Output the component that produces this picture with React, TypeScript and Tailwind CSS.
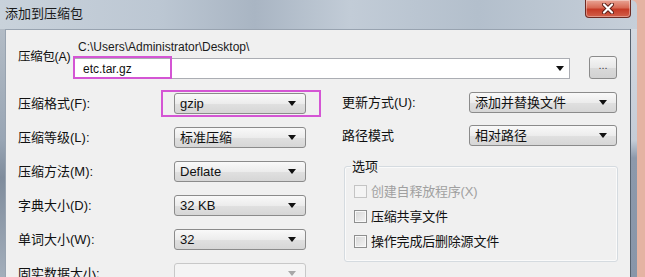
import React from "react";

const font = "font-['Liberation_Sans','Noto_Sans_CJK_SC',sans-serif]";

function Arrow({ disabled }: { disabled?: boolean }) {
  return (
    <svg width="8" height="5" viewBox="0 0 8 5" className="shrink-0">
      <path d="M0 0h8L4 5z" fill={disabled ? "#a8a8a8" : "#111"} />
    </svg>
  );
}

function Select({
  value,
  disabled,
  className = "",
}: {
  value?: string;
  disabled?: boolean;
  className?: string;
}) {
  return (
    <div
      className={`flex h-[21px] shrink-0 items-center justify-between rounded-[3px] border pl-[5px] pr-[9px] ${
        disabled
          ? "border-[#c8c8c8] bg-[#f4f4f4]"
          : "border-[#8b8b8b] bg-[linear-gradient(to_bottom,#f9f9f9,#ececec_50%,#e0e0e0_52%,#d6d6d6)]"
      } ${className}`}
    >
      <span className="whitespace-nowrap text-[13px] leading-none text-[#111]">{value}</span>
      <Arrow disabled={disabled} />
    </div>
  );
}

function Checkbox({ label, disabled }: { label: string; disabled?: boolean }) {
  return (
    <div className="flex h-[25px] items-center gap-[4px]">
      <span
        className={`h-[13px] w-[13px] shrink-0 border ${
          disabled
            ? "border-[#c4c4c4] bg-[#f4f4f4]"
            : "border-[#8e8f8f] bg-[linear-gradient(135deg,#d6d6d6,#f4f4f4)] shadow-[inset_0_0_0_1px_#f8f8f8]"
        }`}
      />
      <span
        className={`whitespace-nowrap text-[13px] leading-none tracking-[-0.2px] ${
          disabled ? "text-[#a0a0a0]" : "text-[#111]"
        }`}
      >
        {label}
      </span>
    </div>
  );
}

const leftRows: { label: string; value?: string; disabled?: boolean }[] = [
  { label: "压缩格式(F):", value: "gzip" },
  { label: "压缩等级(L):", value: "标准压缩" },
  { label: "压缩方法(M):", value: "Deflate" },
  { label: "字典大小(D):", value: "32 KB" },
  { label: "单词大小(W):", value: "32" },
  { label: "固实数据大小:", disabled: true },
];

export default function App() {
  return (
    <div
      className={`flex h-[277px] w-[645px] overflow-hidden bg-[#e4b3a3] ${font} text-[#111]`}
    >
      <div className="flex w-[637px] shrink-0 flex-col rounded-tr-[6px] bg-[linear-gradient(90deg,#c9d2db_0%,#bcc7d3_25%,#a9b5c3_40%,#c2ccd7_55%,#b3bfcc_75%,#c6cfd9_100%)]">
        {/* title bar */}
        <div className="flex h-[29px] shrink-0 items-start">
          <span className="mt-[6px] whitespace-nowrap pl-[5px] text-[13px] leading-[16px] text-[#1a1a1a]">
            添加到压缩包
          </span>
          <div className="ml-auto mr-[6px] flex h-[18px] w-[46px] items-center justify-center rounded-b-[4px] border border-t-0 border-[#6e2a22] bg-[linear-gradient(to_bottom,#e9a596,#d86a55_45%,#c53a26_55%,#d2604a)] shadow-[inset_0_0_0_1px_rgba(255,255,255,0.35)]">
            <svg width="12" height="11" viewBox="0 0 12 11">
              <path
                d="M2 1.5l8 8M10 1.5l-8 8"
                stroke="#5a1d16"
                strokeWidth="4"
                strokeLinecap="round"
              />
              <path
                d="M2 1.5l8 8M10 1.5l-8 8"
                stroke="#fff"
                strokeWidth="2.2"
                strokeLinecap="round"
              />
            </svg>
          </div>
        </div>

        <div className="flex min-h-0 flex-1">
          <div className="w-[5px] shrink-0 bg-[linear-gradient(to_bottom,#b3bcc6,#98a5b4_45%,#7f8c9c_60%,#a3aebb)]" />

          {/* dialog body */}
          <div className="min-w-0 flex-1 border-l border-t border-[#98a3b0] bg-[#f0f0f0] pl-[12px] pr-[13px] pt-[10px]">
            {/* archive path */}
            <div className="flex">
              <div className="w-[55px] shrink-0 whitespace-nowrap pt-[9px] text-[12.5px] leading-[16px] tracking-[-0.3px]">
                压缩包(A)
              </div>
              <div className="min-w-0 flex-1">
                <div className="pl-[5px] text-[12px] leading-[14px] text-[#1a1a1a]">
                  C:\Users\Administrator\Desktop\
                </div>
                <div className="mt-[2px] flex items-end">
                  <div className="relative flex h-[21px] flex-1 items-center justify-between border border-[#abadb3] bg-white pl-[9px] pr-[5px]">
                    <span className="text-[12px] leading-none">etc.tar.gz</span>
                    <Arrow />
                    <span className="absolute -left-px -top-[3px] h-[23px] w-[99px] border-2 border-[#d455d4]" />
                  </div>
                  <div className="ml-[19px] flex h-[23px] w-[28px] shrink-0 items-center justify-center rounded-[3px] border border-[#8b8b8b] bg-[linear-gradient(to_bottom,#f6f6f6,#e8e8e8_50%,#dadada_52%,#d2d2d2)] pb-[4px] text-[11px] leading-none text-[#444]">
                    ...
                  </div>
                </div>
              </div>
            </div>

            {/* options */}
            <div className="mt-[7px] flex">
              <div className="w-[288px] shrink-0">
                {leftRows.map((row, i) => (
                  <div key={row.label} className="flex h-[34px] items-center">
                    <span className="w-[156px] shrink-0 whitespace-nowrap text-[13px] leading-none">
                      {row.label}
                    </span>
                    <div className="relative">
                      <Select
                        value={row.value}
                        disabled={row.disabled}
                        className="w-[132px]"
                      />
                      {i === 0 && (
                        <span className="absolute -left-[13px] -top-[3px] h-[27px] w-[160px] border-2 border-[#d455d4]" />
                      )}
                    </div>
                  </div>
                ))}
              </div>

              <div className="ml-[36px] w-[276px] shrink-0">
                <div className="flex h-[33px] items-center">
                  <span className="w-[127px] shrink-0 whitespace-nowrap text-[13px] leading-none">
                    更新方式(U):
                  </span>
                  <Select value="添加并替换文件" className="w-[148px]" />
                </div>
                <div className="flex h-[33px] items-center">
                  <span className="w-[127px] shrink-0 whitespace-nowrap text-[13px] leading-none">
                    路径模式
                  </span>
                  <Select value="相对路径" className="w-[148px]" />
                </div>

                <div className="relative ml-[2px] mt-[14px] w-[274px] rounded-[3px] border border-[#d5dbe0] pb-[7px] pl-[9px] pt-[12px] shadow-[inset_0_0_0_1px_#fafafa]">
                  <span className="absolute -top-[8px] left-[6px] bg-[#f0f0f0] px-[1px] text-[13px] leading-[16px]">
                    选项
                  </span>
                  <Checkbox label="创建自释放程序(X)" disabled />
                  <Checkbox label="压缩共享文件" />
                  <Checkbox label="操作完成后删除源文件" />
                </div>
              </div>
            </div>
          </div>

          <div className="w-px shrink-0 bg-[#56616e]" />
          <div className="w-[6px] shrink-0 bg-[linear-gradient(to_bottom,#d3d9e1,#c4ccd6_45%,#8c99ab_52%,#8896a9)]" />
        </div>
      </div>
    </div>
  );
}
